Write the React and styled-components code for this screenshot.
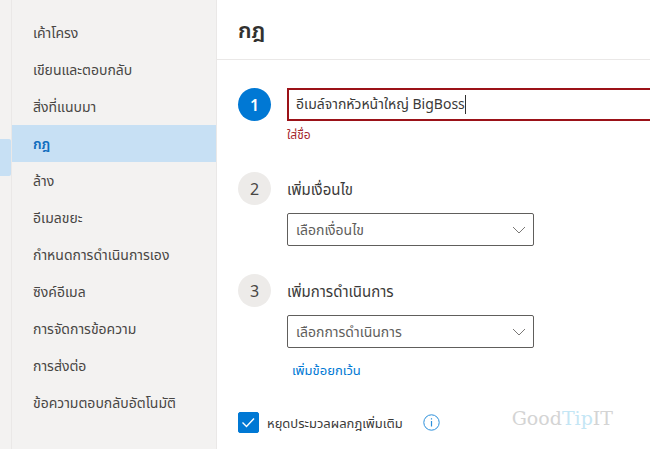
import React from 'react';
import styled, { createGlobalStyle } from 'styled-components';

const GlobalStyle = createGlobalStyle`
  * {
    box-sizing: border-box;
  }

  body {
    margin: 0;
    background-color: #ffffff;
    color: #3b3a39;
    font-family: 'Noto Sans', 'Noto Sans Thai', sans-serif;
    font-size: 14px;
  }

  input, select, button {
    font: inherit;
    color: inherit;
  }
`;

const Page = styled.div`
  display: flex;
  min-height: 100vh;
`;

const Rail = styled.div`
  width: 12px;
  padding-top: 139px;
  background-color: #f3f2f1;
  border-right: 1px solid #eae8e7;
`;

const RailMarker = styled.div`
  height: 37px;
  background-color: #c7e0f4;
  border-radius: 0 2px 2px 0;
`;

const Sidebar = styled.nav`
  width: 205px;
  padding-top: 14px;
  background-color: #f3f2f1;
  border-right: 1px solid #eae8e7;
`;

const NavLink = styled.a`
  display: block;
  height: 37px;
  padding-left: 21px;
  line-height: 38px;
  white-space: nowrap;
  text-decoration: none;
  color: ${(props) => (props.$active ? '#106ebe' : '#484644')};
  font-weight: ${(props) => (props.$active ? 600 : 400)};
  background-color: ${(props) => (props.$active ? '#c7e0f4' : 'transparent')};
`;

const Main = styled.main`
  flex: 1;
  min-width: 0;
`;

const Header = styled.header`
  height: 60px;
  padding-left: 21px;
  border-bottom: 1px solid #eae8e7;
`;

const Title = styled.h1`
  margin: 0;
  font-size: 22px;
  font-weight: 600;
  line-height: 58px;
  color: #323130;
`;

const Form = styled.form`
  padding: 28px 0 0 21px;
`;

const Step = styled.section`
  display: flex;
  gap: 16px;
  min-height: ${(props) => (props.$first ? '84px' : '102px')};
`;

const Badge = styled.span`
  flex: none;
  width: 33px;
  height: 33px;
  border-radius: 50%;
  text-align: center;
  font-size: 16px;
  line-height: 34px;
  color: ${(props) => (props.$active ? '#ffffff' : '#484644')};
  font-weight: ${(props) => (props.$active ? 600 : 400)};
  background-color: ${(props) => (props.$active ? '#0078d4' : '#edebe9')};
`;

const StepBody = styled.div`
  flex: 1;
  min-width: 0;
`;

const NameField = styled.div`
  display: flex;
  align-items: center;
  height: 33px;
  padding-left: 7px;
  border: 2px solid #9b1218;
  border-right: 0;
`;

const NameInput = styled.input`
  field-sizing: content;
  max-width: 100%;
  height: 28px;
  padding: 0;
  border: 0;
  outline: none;
  background: transparent;
  caret-color: transparent;
`;

const Caret = styled.span`
  width: 1px;
  height: 19px;
  background-color: #323130;
`;

const ErrorText = styled.p`
  margin: 6px 0 0;
  font-size: 12px;
  line-height: 16px;
  color: #a4262c;
`;

const StepLabel = styled.label`
  display: block;
  margin-bottom: 7px;
  font-size: 15px;
  line-height: 34px;
`;

const SelectWrap = styled.div`
  display: grid;
  align-items: center;
  width: 247px;
  max-width: 100%;

  & > * {
    grid-area: 1 / 1;
  }

  & > svg {
    justify-self: end;
    margin-right: 8px;
    pointer-events: none;
  }
`;

const Select = styled.select`
  appearance: none;
  width: 100%;
  height: 33px;
  padding: 0 8px;
  border: 1px solid #605e5c;
  border-radius: 2px;
  background-color: #ffffff;
  color: #605e5c;
`;

const ExceptionButton = styled.button`
  display: block;
  margin-top: 12px;
  padding: 0 5px;
  border: 0;
  background: transparent;
  font-size: 13px;
  line-height: 20px;
  color: #0078d4;
`;

const Footer = styled.div`
  display: flex;
  align-items: center;
  margin-top: 32px;
  padding-right: 37px;
`;

const CheckLabel = styled.label`
  display: flex;
  align-items: center;
  gap: 8px;
  font-size: 13px;
  line-height: 20px;
  white-space: nowrap;
`;

const CheckWrap = styled.span`
  display: grid;

  & > * {
    grid-area: 1 / 1;
  }

  & > svg {
    pointer-events: none;
  }
`;

const Checkbox = styled.input`
  appearance: none;
  width: 21px;
  height: 21px;
  margin: 0;
  border: 1px solid #605e5c;
  border-radius: 2px;

  &:checked {
    border-color: #0078d4;
    background-color: #0078d4;
  }
`;

const InfoButton = styled.button`
  display: flex;
  margin-left: 20px;
  padding: 0;
  border: 0;
  background: transparent;
`;

const Brand = styled.span`
  align-self: flex-start;
  margin-left: auto;
  font-family: 'DejaVu Serif', serif;
  font-size: 19px;
  line-height: 12px;
  color: #d4d4d4;
`;

const BrandTip = styled.span`
  color: #c4e6f5;
`;

const menu = [
  'เค้าโครง',
  'เขียนและตอบกลับ',
  'สิ่งที่แนบมา',
  'กฎ',
  'ล้าง',
  'อีเมลขยะ',
  'กำหนดการดำเนินการเอง',
  'ซิงค์อีเมล',
  'การจัดการข้อความ',
  'การส่งต่อ',
  'ข้อความตอบกลับอัตโนมัติ',
];

const Chevron = () => (
  <svg width="14" height="8" viewBox="0 0 14 8" fill="none" stroke="#7a7876">
    <path d="M1 1 L7 7 L13 1" />
  </svg>
);

const Dropdown = ({ id, text }) => (
  <SelectWrap>
    <Select id={id}>
      <option>{text}</option>
    </Select>
    <Chevron />
  </SelectWrap>
);

const App = () => {
  return (
    <>
      <GlobalStyle />
      <Page>
        <Rail>
          <RailMarker />
        </Rail>
        <Sidebar>
          {menu.map((item) => (
            <NavLink key={item} href="#" $active={item === 'กฎ'}>
              {item}
            </NavLink>
          ))}
        </Sidebar>
        <Main>
          <Header>
            <Title>กฎ</Title>
          </Header>
          <Form>
            <Step $first>
              <Badge $active>1</Badge>
              <StepBody>
                <NameField>
                  <NameInput
                    type="text"
                    aria-labelledby="name-hint"
                    defaultValue="อีเมล์จากหัวหน้าใหญ่ BigBoss"
                  />
                  <Caret />
                </NameField>
                <ErrorText id="name-hint">ใส่ชื่อ</ErrorText>
              </StepBody>
            </Step>
            <Step>
              <Badge>2</Badge>
              <StepBody>
                <StepLabel htmlFor="condition">เพิ่มเงื่อนไข</StepLabel>
                <Dropdown id="condition" text="เลือกเงื่อนไข" />
              </StepBody>
            </Step>
            <Step>
              <Badge>3</Badge>
              <StepBody>
                <StepLabel htmlFor="action">เพิ่มการดำเนินการ</StepLabel>
                <Dropdown id="action" text="เลือกการดำเนินการ" />
                <ExceptionButton type="button">เพิ่มข้อยกเว้น</ExceptionButton>
              </StepBody>
            </Step>
            <Footer>
              <CheckLabel>
                <CheckWrap>
                  <Checkbox type="checkbox" defaultChecked />
                  <svg width="21" height="21" viewBox="0 0 21 21" fill="none" stroke="#ffffff" strokeWidth="1.4">
                    <path d="M4.5 10.5 L8.5 14.5 L16 6.5" />
                  </svg>
                </CheckWrap>
                หยุดประมวลผลกฎเพิ่มเติม
              </CheckLabel>
              <InfoButton type="button" aria-label="Info">
                <svg width="17" height="17" viewBox="0 0 17 17" fill="none" stroke="#2b8fdb">
                  <circle cx="8.5" cy="8.5" r="7.7" />
                  <path d="M8.5 7 V12.5 M8.5 4.3 V5.6" strokeWidth="1.2" />
                </svg>
              </InfoButton>
              <Brand>
                Good<BrandTip>Tip</BrandTip>IT
              </Brand>
            </Footer>
          </Form>
        </Main>
      </Page>
    </>
  );
};

export default App;
